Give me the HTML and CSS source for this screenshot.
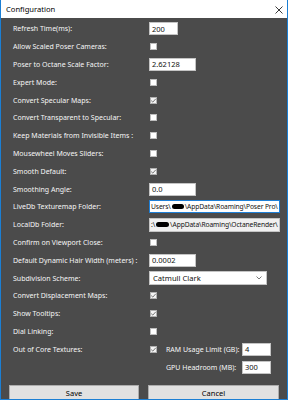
FILE: index.html
```html
<!DOCTYPE html>
<html>
<head>
<meta charset="utf-8">
<link rel="stylesheet" href="styles.css">
</head>
<body>
<div class="window">
  <div class="titlebar">
    <span class="title">Configuration</span>
    <svg class="close" width="8" height="8" viewBox="0 0 8 8"><path d="M0.5 0.5 L7.5 7.5 M7.5 0.5 L0.5 7.5" stroke="#3a3a3a" stroke-width="1" fill="none"/></svg>
  </div>
  <div class="body">
    <div class="form">
      <div class="row"><span class="label">Refresh Time(ms):</span><div class="ctl"><span class="input w29">200</span></div></div>
      <div class="row"><span class="label">Allow Scaled Poser Cameras:</span><div class="ctl"><span class="cb"></span></div></div>
      <div class="row"><span class="label">Poser to Octane Scale Factor:</span><div class="ctl"><span class="input w47">2.62128</span></div></div>
      <div class="row"><span class="label">Expert Mode:</span><div class="ctl"><span class="cb"></span></div></div>
      <div class="row"><span class="label">Convert Specular Maps:</span><div class="ctl"><span class="cb checked"><svg width="7" height="7" viewBox="0 0 7 7"><path d="M1.2 3.6 L2.8 5.1 L5.8 1.8" stroke="#666" stroke-width="0.9" fill="none"/></svg></span></div></div>
      <div class="row"><span class="label">Convert Transparent to Specular:</span><div class="ctl"><span class="cb"></span></div></div>
      <div class="row"><span class="label">Keep Materials from Invisible Items :</span><div class="ctl"><span class="cb"></span></div></div>
      <div class="row"><span class="label">Mousewheel Moves Sliders:</span><div class="ctl"><span class="cb"></span></div></div>
      <div class="row"><span class="label">Smooth Default:</span><div class="ctl"><span class="cb checked"><svg width="7" height="7" viewBox="0 0 7 7"><path d="M1.2 3.6 L2.8 5.1 L5.8 1.8" stroke="#666" stroke-width="0.9" fill="none"/></svg></span></div></div>
      <div class="row"><span class="label">Smoothing Angle:</span><div class="ctl"><span class="input w47">0.0</span></div></div>
      <div class="row"><span class="label">LiveDb Texturemap Folder:</span><div class="ctl"><span class="input wide focus"><span class="seg">Users\</span><span class="redact r1"></span><span class="seg">\AppData\Roaming\Poser Pro\</span></span></div></div>
      <div class="row"><span class="label">LocalDb Folder:</span><div class="ctl"><span class="input wide ro"><span class="seg">:\</span><span class="redact r2"></span><span class="seg">\AppData\Roaming\OctaneRender\</span></span></div></div>
      <div class="row"><span class="label">Confirm on Viewport Close:</span><div class="ctl"><span class="cb"></span></div></div>
      <div class="row"><span class="label">Default Dynamic Hair Width (meters) :</span><div class="ctl"><span class="input w47">0.0002</span></div></div>
      <div class="row"><span class="label">Subdivision Scheme:</span><div class="ctl"><span class="select">Catmull Clark<svg class="chev" width="6" height="4" viewBox="0 0 6 4"><path d="M0.5 0.5 L3 3 L5.5 0.5" stroke="#555" stroke-width="0.8" fill="none"/></svg></span></div></div>
      <div class="row"><span class="label">Convert Displacement Maps:</span><div class="ctl"><span class="cb checked"><svg width="7" height="7" viewBox="0 0 7 7"><path d="M1.2 3.6 L2.8 5.1 L5.8 1.8" stroke="#666" stroke-width="0.9" fill="none"/></svg></span></div></div>
      <div class="row"><span class="label">Show Tooltips:</span><div class="ctl"><span class="cb checked"><svg width="7" height="7" viewBox="0 0 7 7"><path d="M1.2 3.6 L2.8 5.1 L5.8 1.8" stroke="#666" stroke-width="0.9" fill="none"/></svg></span></div></div>
      <div class="row"><span class="label">Dial Linking:</span><div class="ctl"><span class="cb"></span></div></div>
      <div class="row"><span class="label">Out of Core Textures:</span><div class="ctl"><span class="cb checked"><svg width="7" height="7" viewBox="0 0 7 7"><path d="M1.2 3.6 L2.8 5.1 L5.8 1.8" stroke="#666" stroke-width="0.9" fill="none"/></svg></span><span class="sublabel">RAM Usage Limit (GB):</span><span class="input w29">4</span></div></div>
      <div class="row"><span class="label"></span><div class="ctl"><span class="cb-space"></span><span class="sublabel">GPU Headroom (MB):</span><span class="input w29">300</span></div></div>
    </div>
    <div class="buttons">
      <button class="btn save">Save</button>
      <button class="btn cancel">Cancel</button>
    </div>
  </div>
</div>
</body>
</html>
```

FILE: styles.css
```css
html, body {
  margin: 0;
  padding: 0;
}
body {
  width: 288px;
  height: 400px;
  overflow: hidden;
  font-family: "Noto Sans", "Open Sans", sans-serif;
}
.window {
  box-sizing: border-box;
  width: 288px;
  height: 400px;
  border-left: 1px solid #1b7fd4;
  border-right: 1px solid #1b7fd4;
  border-bottom: 1px solid #1b7fd4;
  display: flex;
  flex-direction: column;
  overflow: hidden;
}
.titlebar {
  height: 18px;
  flex: none;
  background: #ffffff;
  display: flex;
  align-items: center;
  justify-content: space-between;
  padding: 0 4px 0 5px;
}
.title {
  font-size: 7.6px;
  color: #000;
}
.close {
  display: block;
  margin-top: 1px;
}
.body {
  flex: 1;
  background: #4b4b4b;
  padding-top: 2px;
  overflow: hidden;
}
.form {
  display: flex;
  flex-direction: column;
  padding-left: 12px;
}
.row {
  height: 17.8px;
  display: flex;
  align-items: center;
}
.label {
  width: 136px;
  flex: none;
  font-size: 7px;
  color: #f6f6f6;
  white-space: nowrap;
}
.ctl {
  display: flex;
  align-items: center;
}
.input {
  box-sizing: border-box;
  height: 13px;
  background: #fff;
  border: 1px solid #c4c4c4;
  font-size: 7.5px;
  color: #111;
  padding-left: 2px;
  display: flex;
  align-items: center;
  white-space: nowrap;
  overflow: hidden;
}
.seg {
  flex: none;
}
.w29 { width: 29px; }
.w47 { width: 47px; }
.wide {
  width: 131px;
  padding-left: 1px;
  font-size: 6.7px;
  letter-spacing: -0.1px;
}
.focus {
  border-color: #1e7fd6;
}
.ro {
  background: #f0f0f0;
  border-color: #c4c4c4;
  height: 14px;
}
.redact {
  flex: none;
  display: block;
  height: 5px;
  background: #000;
  border-radius: 3px;
  margin: 0 1px;
}
.r1 { width: 12px; }
.r2 { width: 13px; }
.cb {
  box-sizing: border-box;
  width: 7px;
  height: 7px;
  margin-left: 1px;
  background: #fff;
  border: 1px solid #bdbdbd;
  position: relative;
  flex: none;
}
.cb.checked {
  background: #f4f4f4;
  border-color: #b0b0b0;
}
.cb svg {
  position: absolute;
  left: -1px;
  top: -1px;
}
.cb-space {
  width: 8px;
  flex: none;
}
.sublabel {
  width: 76px;
  margin-left: 9px;
  font-size: 7px;
  color: #f6f6f6;
  white-space: nowrap;
}
.select {
  box-sizing: border-box;
  width: 118px;
  height: 14px;
  background: #fff;
  border: 1px solid #c4c4c4;
  font-size: 7.6px;
  color: #111;
  padding-left: 3px;
  display: flex;
  align-items: center;
  justify-content: space-between;
  padding-right: 4px;
}
.chev {
  display: block;
}
.buttons {
  display: flex;
  gap: 9px;
  padding-left: 8px;
  margin-top: 9px;
}
.btn {
  box-sizing: border-box;
  height: 16px;
  background: #e1e1e1;
  border: 1px solid #adadad;
  font-family: "Noto Sans", "Open Sans", sans-serif;
  font-size: 7.5px;
  color: #000;
  padding: 0;
  margin: 0;
}
.save { width: 130px; }
.cancel { width: 131px; }
```
